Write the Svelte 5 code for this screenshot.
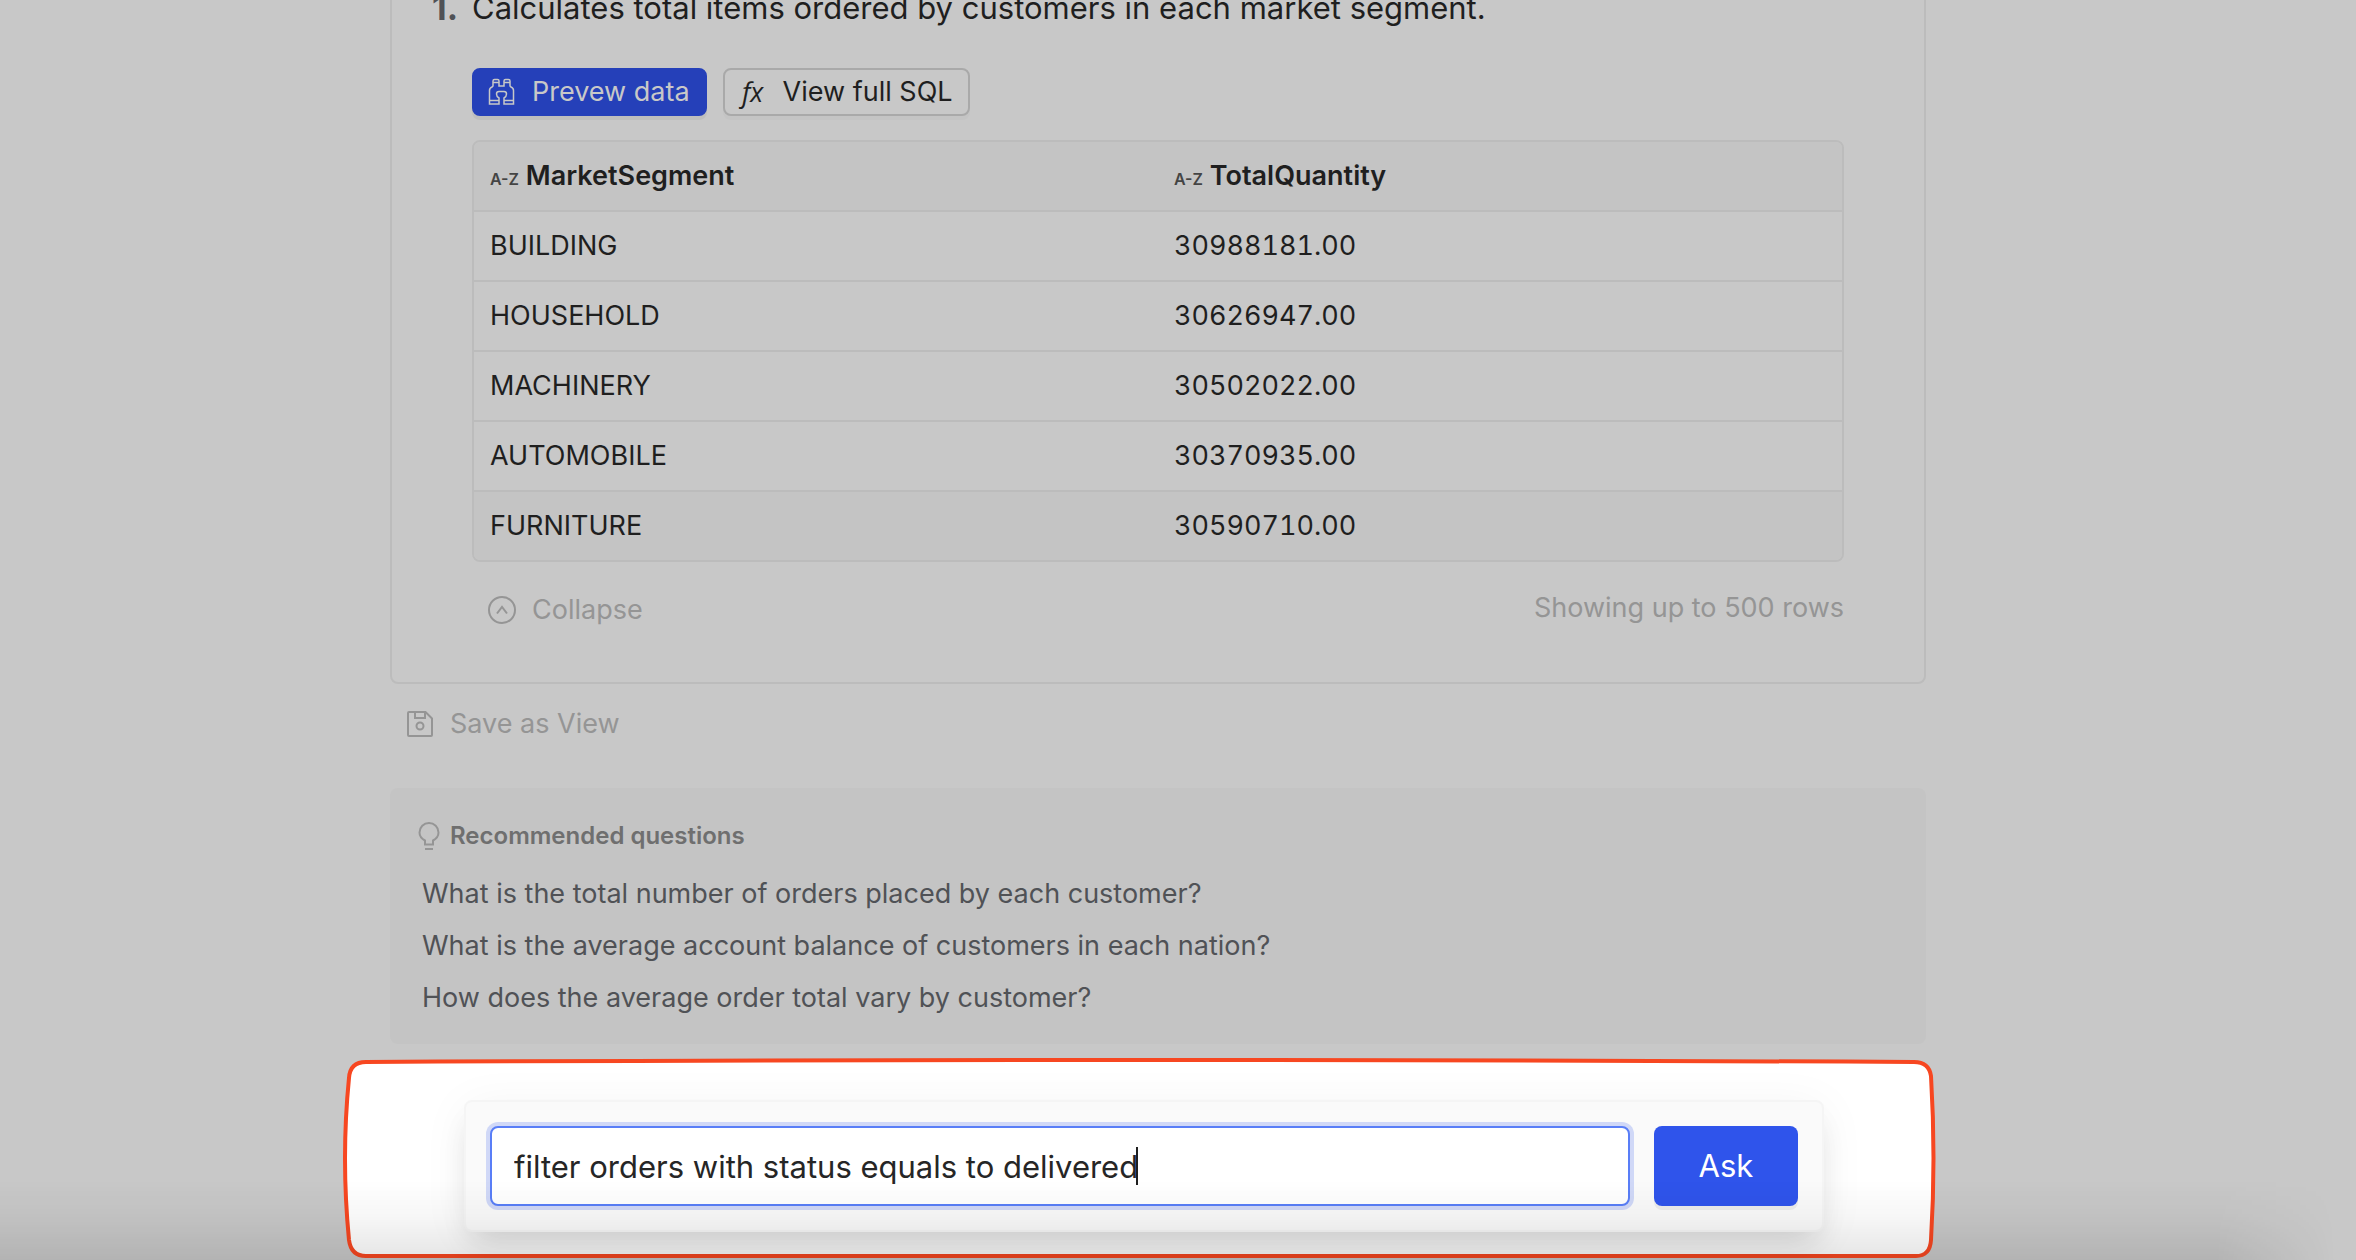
<script>
  let question = $state('filter orders with status equals to delivered');

  const columns = ['MarketSegment', 'TotalQuantity'];
  const rows = [
    ['BUILDING', '30988181.00'],
    ['HOUSEHOLD', '30626947.00'],
    ['MACHINERY', '30502022.00'],
    ['AUTOMOBILE', '30370935.00'],
    ['FURNITURE', '30590710.00']
  ];

  const recommended = [
    'What is the total number of orders placed by each customer?',
    'What is the average account balance of customers in each nation?',
    'How does the average order total vary by customer?'
  ];
</script>

<main>
  <div class="column">
    <section class="card">
      <div class="step">
        <span class="num">1.</span>
        <div class="body">
          <p>Calculates total items ordered by customers in each market segment.</p>

          <div class="actions">
            <button class="btn primary">
              <svg class="icon" viewBox="0 0 28 28" width="28" height="28">
                <path d="M1.5 26V12.5Q1.5 10 4 9L5 8V3Q5 1.500 6.500 1.500H9.500Q11 1.500 11 3V8H16V3Q16 1.500 17.500 1.500H20.500Q22 1.500 22 3V8L23 9Q25.500 10 25.500 12.500V26H16V20Q18.500 18.500 18.500 16Q18.500 13.500 16 13.500H11Q8.500 13.500 8.500 16Q8.500 18.500 11 20V26ZM1.500 22.500H11M16 22.500H25.500M5 4.500H11M16 4.500H22" />
              </svg>
              Prevew data
            </button>
            <button class="btn">
              <span class="icon fx">fx</span>
              View full SQL
            </button>
          </div>

          <table>
            <thead>
              <tr>
                {#each columns as column}
                  <th><span class="az">A-Z</span> {column}</th>
                {/each}
              </tr>
            </thead>
            <tbody>
              {#each rows as row}
                <tr>
                  {#each row as cell}
                    <td>{cell}</td>
                  {/each}
                </tr>
              {/each}
            </tbody>
          </table>

          <div class="foot">
            <button class="link">
              <svg class="icon" viewBox="0 0 28 28" width="28" height="28">
                <circle cx="14" cy="14" r="13" />
                <path d="M9 17.500L14 11L19 17.500" />
              </svg>
              Collapse
            </button>
            <span>Showing up to 500 rows</span>
          </div>
        </div>
      </div>
    </section>

    <button class="link save">
      <svg class="icon" viewBox="0 0 28 28" width="28" height="28">
        <path d="M2 3V25Q2 26 3 26H25Q26 26 26 25V8.500L19.500 2H3Q2 2 2 3ZM9 2V8H19V2" />
        <circle cx="14" cy="16" r="3.500" />
      </svg>
      Save as View
    </button>

    <section class="recommended">
      <h2>
        <svg class="icon" viewBox="0 0 22 28" width="22" height="28">
          <path d="M7 22.500V18.500Q1.500 15.500 1.500 10.500A9.500 9.500 0 0 1 20.500 10.500Q20.500 15.500 15 18.500V22.500ZM7 27H15" />
        </svg>
        Recommended questions
      </h2>
      <ul>
        {#each recommended as item}
          <li><a href="#ask">{item}</a></li>
        {/each}
      </ul>
    </section>

    <div class="prompt">
      <svg class="highlight" viewBox="0 0 1592 202" preserveAspectRatio="none">
        <path d="M22 4Q780 0 1570 4Q1585 4 1587 18Q1592 100 1587 182Q1586 198 1572 198Q780 200 22 198Q7 198 5 182Q-3 100 5 20Q6 4 22 4Z" />
      </svg>
      <form id="ask" onsubmit={(e) => e.preventDefault()}>
        <div class="field">
          <input type="text" aria-label="Ask a question" bind:value={question} />
          <span class="caret"></span>
        </div>
        <button class="ask">Ask</button>
      </form>
    </div>
  </div>
  <div class="shade"></div>
</main>

<style>
  :global(body) {
    background: #c8c8c8;
    overflow: hidden;
  }

  main {
    position: relative;
    box-sizing: border-box;
    min-height: 100vh;
    padding-right: 40px;
    overflow: hidden;
    color: #1f1f1f;
    font: 27px/44px Inter, sans-serif;
  }

  .column {
    max-width: 1536px;
    margin: 0 auto;
  }

  button {
    display: inline-flex;
    align-items: center;
    box-sizing: border-box;
    color: inherit;
    font: inherit;
    cursor: pointer;
  }

  .icon {
    flex: none;
    fill: none;
    stroke: currentColor;
    stroke-width: 2;
  }

  .card {
    box-sizing: border-box;
    height: 724px;
    margin-top: -40px;
    padding: 24px 80px 0 40px;
    border: 2px solid #bcbcbc;
    border-radius: 8px;
  }

  .step {
    display: flex;
  }

  .num {
    flex: none;
    width: 40px;
    color: #505256;
    font-size: 34px;
    font-weight: 700;
  }

  .body {
    flex: 1;
  }

  p {
    margin: 0 0 38px;
    font-size: 31px;
  }

  .actions {
    display: flex;
    gap: 16px;
    margin-bottom: 24px;
  }

  .btn {
    gap: 16px;
    height: 48px;
    padding: 0 15px 0 14px;
    border: 2px solid #a9a9a9;
    border-radius: 8px;
    background: #c8c8c8;
    box-shadow: 0 4px 0 #c4c4c4;
  }

  .primary {
    border-color: #2540b9;
    background: #2540b9;
    box-shadow: 0 4px 0 #bebebe;
    color: #c8c8c8;
  }

  .primary .icon {
    stroke-width: 1.5;
  }

  .fx {
    width: 28px;
    font-family: "Open Sans", sans-serif;
    font-size: 27px;
    font-style: italic;
    line-height: 40px;
    text-align: center;
  }

  table {
    width: 100%;
    table-layout: fixed;
    border: 2px solid #bcbcbc;
    border-radius: 8px;
    border-spacing: 0;
    overflow: hidden;
  }

  th,
  td {
    height: 68px;
    padding: 0 16px;
    border-bottom: 2px solid #bcbcbc;
    text-align: left;
  }

  td {
    font-variant-numeric: tabular-nums;
  }

  th {
    font-weight: 600;
  }

  th,
  tr:last-child td {
    background: #c4c4c4;
  }

  tr:last-child td {
    border-bottom: 0;
  }

  .az {
    color: #444;
    font-size: 16px;
    font-weight: 600;
    line-height: 1;
  }

  .foot {
    display: flex;
    justify-content: space-between;
    margin-top: 24px;
    color: #959595;
  }

  .link {
    gap: 16px;
    padding: 2px 16px 0;
    border: 0;
    background: none;
    color: #959595;
  }

  .save {
    margin-top: 16px;
    vertical-align: top;
  }

  .recommended {
    box-sizing: border-box;
    margin-top: 42px;
    padding: 26px 24px 20px;
    border-radius: 8px;
    background: #c4c4c4;
  }

  h2 {
    display: flex;
    align-items: center;
    gap: 10px;
    margin: 0 0 10px;
    padding-left: 4px;
    color: #6f6f6f;
    font-size: 24px;
    font-weight: 600;
  }

  h2 .icon {
    stroke: #959595;
  }

  ul {
    margin: 0;
    padding: 0 8px;
    list-style: none;
  }

  li {
    line-height: 52px;
  }

  a {
    color: #505256;
    text-decoration: none;
  }

  .prompt {
    position: relative;
    margin-top: 14px;
    padding: 42px 102px 28px 74px;
  }

  /* hand-drawn frame that keeps the prompt lit while the page is dimmed */
  .highlight {
    position: absolute;
    top: 0;
    left: -46px;
    width: calc(100% + 56px);
    height: 100%;
    overflow: visible;
    fill: #fff;
    stroke: #f74721;
    stroke-width: 4;
  }

  form {
    position: relative;
    display: flex;
    gap: 24px;
    padding: 24px;
    border: 2px solid #f5f5f5;
    border-radius: 8px;
    background: #fafafa;
    box-shadow: 0 18px 28px -8px rgba(0, 0, 0, 0.12), 0 6px 48px rgba(0, 0, 0, 0.05);
    font-size: 31px;
  }

  .field {
    position: relative;
    flex: 1;
  }

  input {
    box-sizing: border-box;
    width: 100%;
    height: 80px;
    padding: 0 22px;
    border: 2px solid #597ef7;
    border-radius: 8px;
    outline: 0;
    background: #fff;
    box-shadow: 0 0 0 4px #d0d8f7;
    color: #262626;
    font: inherit;
  }

  .caret {
    position: absolute;
    top: 21px;
    left: 646px;
    width: 2px;
    height: 38px;
    background: #1f1f1f;
  }

  .ask {
    justify-content: center;
    width: 144px;
    height: 80px;
    border: 0;
    border-radius: 8px;
    background: #2f54eb;
    box-shadow: 0 4px 0 #ededed;
    color: #fff;
  }

  .shade {
    position: absolute;
    inset: auto 0 0;
    height: 80px;
    background: linear-gradient(transparent, rgba(0, 0, 0, 0.03) 45%, rgba(0, 0, 0, 0.1));
    mask-image: linear-gradient(to left, transparent 20px, #000 140px);
    pointer-events: none;
  }
</style>
